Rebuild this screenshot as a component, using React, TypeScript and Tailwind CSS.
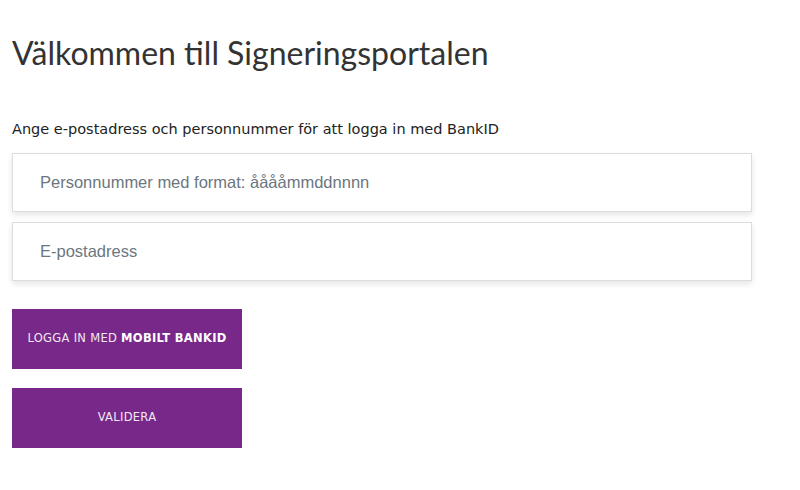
export default function App() {
  return (
    <div className="min-h-[490px] w-[800px] bg-white px-3 pt-[31px]">
      <h1 className="font-['Lato',sans-serif] text-[32px] font-normal leading-[44px] text-[#333333]">
        Välkommen till Signeringsportalen
      </h1>
      <p className="mt-[44px] font-['DejaVu_Sans',sans-serif] text-[14.5px] leading-5 text-[#222222]">
        Ange e-postadress och personnummer för att logga in med BankID
      </p>
      <div className="mt-[14px] flex w-[740px] flex-col gap-[10px]">
        <input
          type="text"
          placeholder="Personnummer med format: ååååmmddnnnn"
          className="h-[59px] w-full border border-[#dddddd] bg-white px-[27px] font-['Liberation_Sans',sans-serif] text-[16.5px] text-[#333] shadow-[0_3px_6px_rgba(0,0,0,0.1)] outline-none placeholder:text-[#6c7680]"
        />
        <input
          type="email"
          placeholder="E-postadress"
          className="h-[59px] w-full border border-[#dddddd] bg-white px-[27px] font-['Liberation_Sans',sans-serif] text-[16.5px] text-[#333] shadow-[0_3px_6px_rgba(0,0,0,0.1)] outline-none placeholder:text-[#6c7680]"
        />
      </div>
      <div className="mt-[28px] flex flex-col gap-[19px]">
        <button className="h-[60px] w-[230px] bg-[#772889] font-['DejaVu_Sans',sans-serif] text-[11.5px] tracking-[0.3px] text-[#f3e8f5]">
          LOGGA IN MED <span className="font-bold text-white">MOBILT BANKID</span>
        </button>
        <button className="h-[60px] w-[230px] bg-[#772889] font-['DejaVu_Sans',sans-serif] text-[11.5px] tracking-[0.3px] text-[#f3e8f5]">
          VALIDERA
        </button>
      </div>
    </div>
  );
}
